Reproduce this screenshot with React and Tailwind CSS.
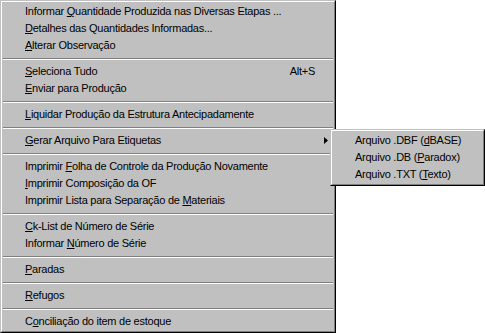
import React from "react";

const mainItems = [
  { label: "Informar &Quantidade Produzida nas Diversas Etapas ..." },
  { label: "&Detalhes das Quantidades Informadas..." },
  { label: "&Alterar Observação" },
  { sep: true },
  { label: "&Seleciona Tudo", shortcut: "Alt+S" },
  { label: "&Enviar para Produção" },
  { sep: true },
  { label: "&Liquidar Produção da Estrutura Antecipadamente" },
  { sep: true },
  { label: "&Gerar Arquivo Para Etiquetas", sub: true },
  { sep: true },
  { label: "Imprimir &Folha de Controle da Produção Novamente" },
  { label: "&Imprimir Composição da OF" },
  { label: "Imprimir Lista para Separação de &Materiais" },
  { sep: true },
  { label: "&Ck-List de Número de Série" },
  { label: "Informar &Número de Série" },
  { sep: true },
  { label: "&Paradas" },
  { sep: true },
  { label: "&Refugos" },
  { sep: true },
  { label: "C&onciliação do item de estoque" },
];

const subItems = [
  "Arquivo .DBF (&dBASE)",
  "Arquivo .DB (&Paradox)",
  "Arquivo .TXT (&Texto)",
];

function Label({ text }) {
  const i = text.indexOf("&");
  if (i < 0) return <span>{text}</span>;
  return (
    <span className="whitespace-pre">
      {text.slice(0, i)}
      <span className="underline underline-offset-[1px] decoration-1">{text[i + 1]}</span>
      {text.slice(i + 2)}
    </span>
  );
}

function Separator() {
  return (
    <div className="h-[9px] pt-[4px]">
      <div className="h-px bg-[#808080]" />
      <div className="h-px bg-white" />
    </div>
  );
}

function MenuBox({ children, className }) {
  return (
    <div
      className={
        "border border-t-[#c0c0c0] border-l-[#c0c0c0] border-r-black border-b-black " +
        className
      }
    >
      <div className="border border-t-white border-l-white border-r-[#808080] border-b-[#808080] bg-[#c0c0c0] p-px">
        {children}
      </div>
    </div>
  );
}

export default function App() {
  return (
    <div className="relative h-[333px] w-[485px] overflow-hidden bg-white font-['Liberation_Sans',Arial,sans-serif] text-[11px] tracking-[-0.25px] text-black">
      <MenuBox className="w-[336px]">
        {mainItems.map((it, idx) =>
          it.sep ? (
            <Separator key={idx} />
          ) : (
            <div key={idx} className="flex h-[17px] items-center pl-[22px] pr-[18px]">
              <Label text={it.label} />
              {it.shortcut && <span className="ml-auto">{it.shortcut}</span>}
              {it.sub && (
                <svg className="-mr-[13px] ml-auto" width="4" height="7" viewBox="0 0 4 7">
                  <path d="M0 0 L4 3.5 L0 7 Z" fill="black" />
                </svg>
              )}
            </div>
          )
        )}
      </MenuBox>
      <MenuBox className="absolute left-[330px] top-[129px] w-[155px]">
        {subItems.map((t) => (
          <div key={t} className="flex h-[17px] items-center pl-[22px]">
            <Label text={t} />
          </div>
        ))}
      </MenuBox>
    </div>
  );
}
